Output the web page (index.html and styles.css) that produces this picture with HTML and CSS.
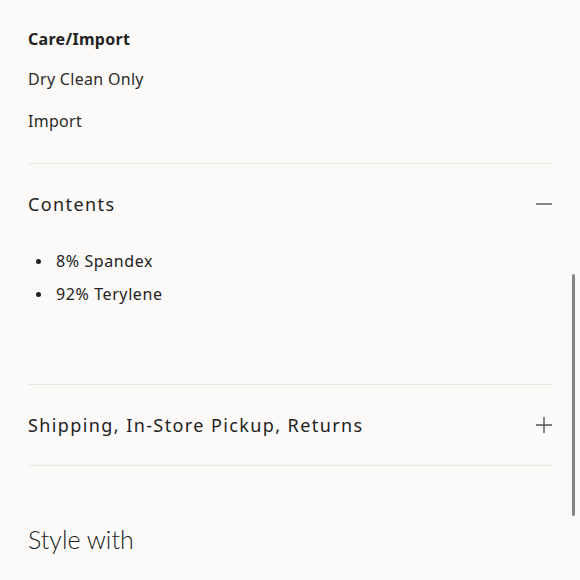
FILE: index.html
```html
<!DOCTYPE html>
<html>
<head>
<meta charset="utf-8">
<link rel="stylesheet" href="styles.css">
</head>
<body>
<div class="page">
  <section class="care">
    <h3 class="care-title">Care/Import</h3>
    <p class="care-line">Dry Clean Only</p>
    <p class="care-line">Import</p>
  </section>
  <section class="acc">
    <div class="acc-head">
      <span class="acc-title">Contents</span>
      <svg class="acc-icon" width="16" height="16" viewBox="0 0 16 16"><path d="M0 8H16" stroke="#555" stroke-width="1.4" fill="none"/></svg>
    </div>
    <ul class="acc-list">
      <li class="acc-item"><span class="dot"></span>8% Spandex</li>
      <li class="acc-item"><span class="dot"></span>92% Terylene</li>
    </ul>
  </section>
  <section class="acc closed">
    <div class="acc-head">
      <span class="acc-title">Shipping, In-Store Pickup, Returns</span>
      <svg class="acc-icon" width="16" height="16" viewBox="0 0 16 16"><path d="M0 8H16M8 0V16" stroke="#555" stroke-width="1.4" fill="none"/></svg>
    </div>
  </section>
  <h2 class="style-with">Style with</h2>
</div>
<div class="scrollbar"></div>
</body>
</html>
```
FILE: styles.css
```css
html, body {
  margin: 0;
  padding: 0;
  background: #fcfaf9;
  height: 100%;
  overflow: hidden;
}
body {
  font-family: "Noto Sans", "Open Sans", sans-serif;
  color: #222;
}
.page {
  padding: 27px 28px 0 28px;
}
.care {
  padding-bottom: 30px;
  border-bottom: 1px solid #ebe7e3;
}
.care-title {
  margin: 0;
  font-size: 16px;
  line-height: 24px;
  font-weight: 700;
  letter-spacing: 0.3px;
}
.care-line {
  margin: 16px 0 0 0;
  font-size: 16px;
  line-height: 24px;
  letter-spacing: 0.3px;
  color: #2a2a2a;
}
.care-line + .care-line {
  margin-top: 18px;
}
.acc {
  border-bottom: 1px solid #ebe7e3;
  padding-bottom: 78px;
}
.acc.closed {
  padding-bottom: 0;
}
.acc-head {
  display: flex;
  justify-content: space-between;
  align-items: center;
  padding: 28px 0;
}
.acc-title {
  font-size: 18px;
  line-height: 24px;
  letter-spacing: 1.4px;
}
.acc-icon {
  display: block;
}
.acc-list {
  list-style: none;
  margin: 5px 0 0 0;
  padding: 0;
}
.acc-item {
  display: flex;
  align-items: center;
  font-size: 16px;
  line-height: 24px;
  letter-spacing: 0.6px;
}
.acc-item + .acc-item {
  margin-top: 9px;
}
.dot {
  width: 5px;
  height: 5px;
  border-radius: 50%;
  background: #222;
  margin: 0 15px 0 8px;
}
.style-with {
  margin: 57px 0 0 0;
  font-family: "Lato", sans-serif;
  font-weight: 300;
  font-size: 25px;
  line-height: 32px;
  color: #1a1a1a;
}
.scrollbar {
  position: absolute;
  right: 5px;
  top: 274px;
  width: 3px;
  height: 242px;
  border-radius: 2px;
  background: #838383;
}
```
